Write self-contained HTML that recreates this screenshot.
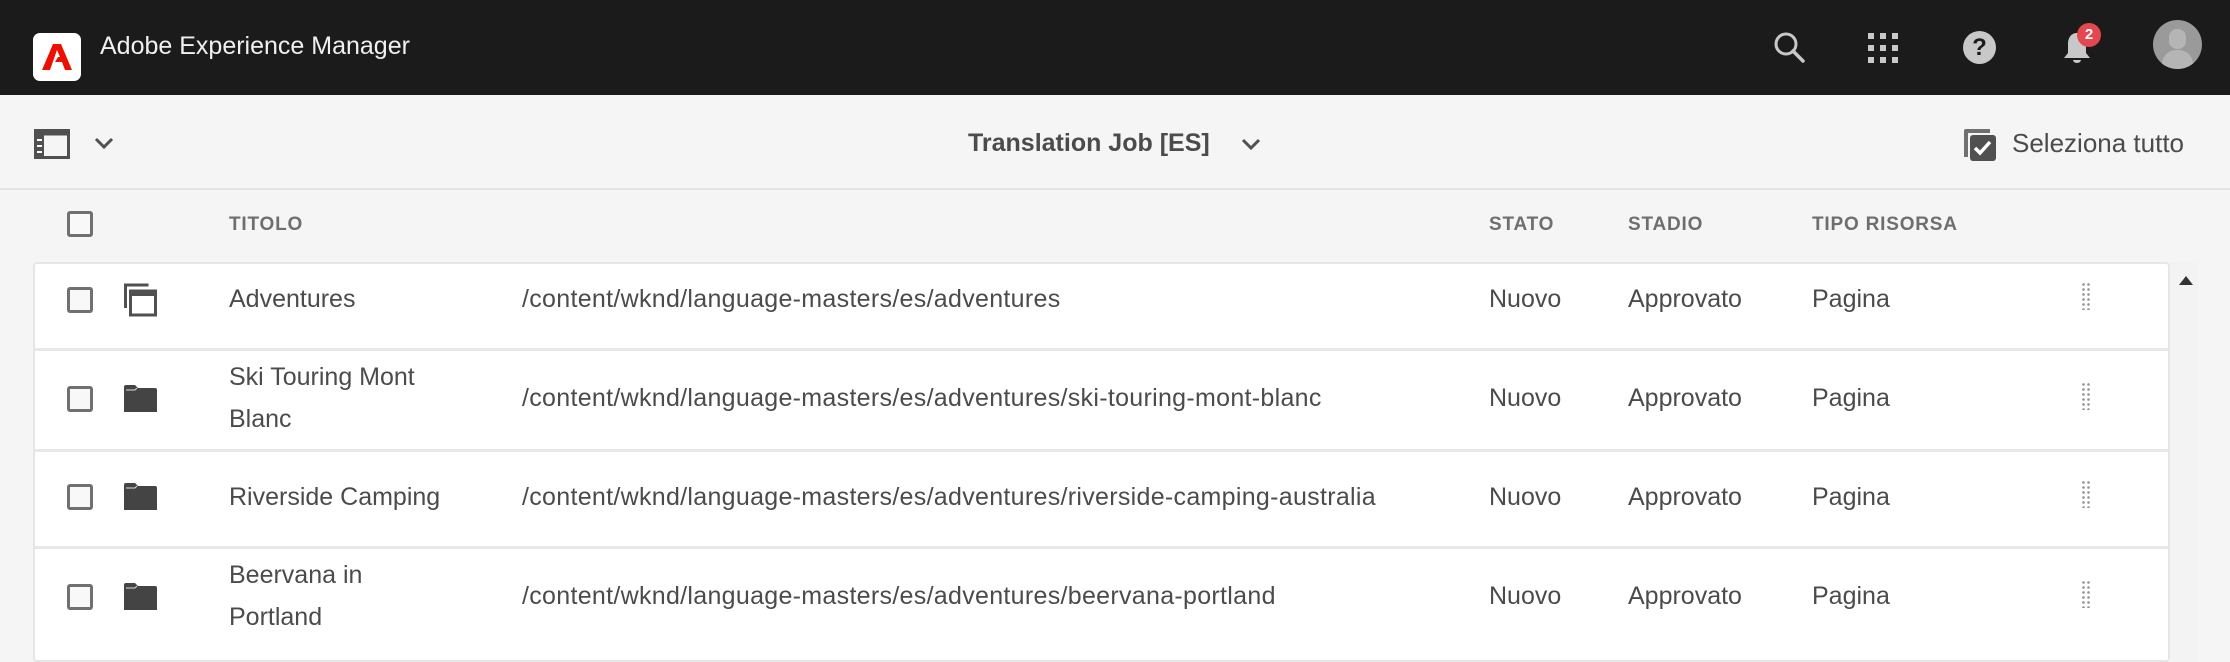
<!DOCTYPE html>
<html><head><meta charset="utf-8">
<style>
*{margin:0;padding:0;box-sizing:border-box}
body{width:2230px;height:648px;overflow:hidden;background:#f5f5f5;font-family:"Liberation Sans",sans-serif;color:#4b4b4b;position:relative}
.abs{position:absolute}
.top{left:0;top:0;width:2230px;height:95px;background:#1b1b1b}
.tb{left:0;top:96px;width:2230px;height:94px;background:#f5f5f5;border-bottom:2px solid #e3e3e3}
.cb{position:absolute;width:26px;height:26px;border:3px solid #707070;border-radius:3px;background:#f8f8f8}
.hd{font-size:19px;font-weight:bold;color:#6e6e6e;letter-spacing:.8px;top:214px}
.card{left:33px;top:262px;width:2137px;height:400px;background:#fff;border:2px solid #e6e6e6;border-radius:4px}
.sep{position:absolute;left:35px;width:2133px;height:3px;background:#e8e8e8}
.t{font-size:25px;color:#4b4b4b;position:absolute;white-space:nowrap}
.p{letter-spacing:.3px}
.dots{position:absolute;width:10px;height:28px;background-image:radial-gradient(circle,#9a9a9a 1.2px,transparent 1.5px);background-size:5px 5px}
</style></head><body>
<div class="abs top"></div>
<div class="abs" style="left:33px;top:33px;width:48px;height:48px;background:#fff;border-radius:7px"></div>
<svg class="abs" style="left:42px;top:44px" width="30" height="26" viewBox="0 0 30 26"><path d="M11 0h8l11 26h-7l-3-8h-7l3-5h2l-3-7-7 20H0z" fill="#eb1000"/></svg>
<div class="abs" style="left:100px;top:32px;font-size:25px;color:#f0f0f0">Adobe Experience Manager</div>
<svg class="abs" style="left:1773px;top:31px" width="34" height="34" viewBox="0 0 34 34"><circle cx="13" cy="13" r="10" fill="none" stroke="#c8c8c8" stroke-width="3"/><path d="M20 20l10 10" stroke="#c8c8c8" stroke-width="3.5" stroke-linecap="round"/></svg>
<svg class="abs" style="left:1867px;top:32px" width="32" height="32" viewBox="0 0 32 32" fill="#c8c8c8"><rect x="1" y="1" width="6" height="6"/><rect x="13" y="1" width="6" height="6"/><rect x="25" y="1" width="6" height="6"/><rect x="1" y="13" width="6" height="6"/><rect x="13" y="13" width="6" height="6"/><rect x="25" y="13" width="6" height="6"/><rect x="1" y="25" width="6" height="6"/><rect x="13" y="25" width="6" height="6"/><rect x="25" y="25" width="6" height="6"/></svg>
<div class="abs" style="left:1963px;top:31px;width:33px;height:33px;border-radius:50%;background:#c8c8c8;color:#1b1b1b;font-weight:bold;font-size:24px;text-align:center;line-height:33px">?</div>
<svg class="abs" style="left:2058px;top:30px" width="38" height="38" viewBox="0 0 38 38"><path d="M19 3c-6 0-9 5-9 11v9l-4 5h26l-4-5v-9c0-6-3-11-9-11z" fill="#c8c8c8"/><path d="M15 30h8a4 3 0 0 1-8 0z" fill="#c8c8c8"/></svg>
<div class="abs" style="left:2077px;top:23px;width:24px;height:24px;border-radius:50%;background:#e34850;color:#fff;font-weight:bold;font-size:15px;text-align:center;line-height:24px">2</div>
<div class="abs" style="left:2153px;top:20px;width:49px;height:49px;border-radius:50%;background:#9a9a9a;overflow:hidden"><div style="position:absolute;left:16px;top:9px;width:17px;height:20px;border-radius:8px;background:#b5b5b5"></div><div style="position:absolute;left:9px;top:30px;width:31px;height:22px;border-radius:14px 14px 0 0;background:#b5b5b5"></div></div>

<div class="abs tb"></div>
<svg class="abs" style="left:34px;top:129px" width="36" height="30" viewBox="0 0 36 30"><rect x="1.5" y="1.5" width="33" height="27" fill="none" stroke="#505050" stroke-width="3"/><rect x="1.5" y="1.5" width="33" height="5" fill="#505050"/><rect x="1" y="6" width="9" height="23" fill="#505050"/><rect x="3" y="10" width="5" height="2" fill="#fff"/><rect x="3" y="16" width="5" height="2" fill="#fff"/><rect x="3" y="22" width="5" height="2" fill="#fff"/></svg>
<svg class="abs" style="left:94px;top:137px" width="20" height="14" viewBox="0 0 20 14"><path d="M2 2l8 8 8-8" fill="none" stroke="#505050" stroke-width="3"/></svg>
<div class="abs" style="left:968px;top:129px;font-size:25px;font-weight:bold;color:#4b4b4b">Translation Job [ES]</div>
<svg class="abs" style="left:1241px;top:138px" width="20" height="14" viewBox="0 0 20 14"><path d="M2 2l8 8 8-8" fill="none" stroke="#505050" stroke-width="3"/></svg>
<svg class="abs" style="left:1962px;top:127px" width="36" height="36" viewBox="0 0 36 36"><path d="M2 4v26h4V6h22V2H4a2 2 0 0 0-2 2z" fill="#707070"/><rect x="8" y="8" width="26" height="26" rx="3" fill="#505050"/><path d="M13 21l5 5 10-11" fill="none" stroke="#fff" stroke-width="3.5"/></svg>
<div class="abs" style="left:2012px;top:128px;font-size:26px;color:#4b4b4b">Seleziona tutto</div>

<div class="cb" style="left:67px;top:211px"></div>
<div class="abs hd" style="left:229px">TITOLO</div>
<div class="abs hd" style="left:1489px">STATO</div>
<div class="abs hd" style="left:1628px">STADIO</div>
<div class="abs hd" style="left:1812px">TIPO RISORSA</div>

<div class="abs card"></div>
<div class="abs" style="left:2170px;top:262px;width:28px;height:400px;background:#f3f3f3"></div>
<svg class="abs" style="left:2179px;top:276px" width="14" height="9" viewBox="0 0 14 9"><path d="M7 0l7 9H0z" fill="#333"/></svg>
<div class="sep" style="top:348px"></div>
<div class="sep" style="top:449px"></div>
<div class="sep" style="top:546px"></div>

<!-- row1 -->
<div class="cb" style="left:67px;top:287px"></div>
<svg class="abs" style="left:124px;top:283px" width="34" height="34" viewBox="0 0 34 34"><path d="M1.5 25V2h23" fill="none" stroke="#505050" stroke-width="3"/><rect x="6.5" y="8" width="25" height="24" fill="none" stroke="#505050" stroke-width="3"/><rect x="6" y="7" width="26" height="6" fill="#505050"/></svg>
<div class="t" style="left:229px;top:285px">Adventures</div>
<div class="t p" style="left:522px;top:285px">/content/wknd/language-masters/es/adventures</div>
<div class="t" style="left:1489px;top:285px">Nuovo</div>
<div class="t" style="left:1628px;top:285px">Approvato</div>
<div class="t" style="left:1812px;top:285px">Pagina</div>
<div class="dots" style="left:2081px;top:282px"></div>

<!-- row2 -->
<div class="cb" style="left:67px;top:386px"></div>
<svg class="abs" style="left:124px;top:385px" width="33" height="27" viewBox="0 0 33 27"><path d="M0 2a2 2 0 0 1 2-2h9l3 3h17a2 2 0 0 1 2 2v22H0z" fill="#444"/><path d="M2 5h9l2-2" fill="none" stroke="#ddd" stroke-width="1"/></svg>
<div class="t" style="left:229px;top:363px">Ski Touring Mont</div>
<div class="t" style="left:229px;top:405px">Blanc</div>
<div class="t p" style="left:522px;top:384px">/content/wknd/language-masters/es/adventures/ski-touring-mont-blanc</div>
<div class="t" style="left:1489px;top:384px">Nuovo</div>
<div class="t" style="left:1628px;top:384px">Approvato</div>
<div class="t" style="left:1812px;top:384px">Pagina</div>
<div class="dots" style="left:2081px;top:382px"></div>

<!-- row3 -->
<div class="cb" style="left:67px;top:484px"></div>
<svg class="abs" style="left:124px;top:483px" width="33" height="27" viewBox="0 0 33 27"><path d="M0 2a2 2 0 0 1 2-2h9l3 3h17a2 2 0 0 1 2 2v22H0z" fill="#444"/><path d="M2 5h9l2-2" fill="none" stroke="#ddd" stroke-width="1"/></svg>
<div class="t" style="left:229px;top:483px">Riverside Camping</div>
<div class="t p" style="left:522px;top:483px">/content/wknd/language-masters/es/adventures/riverside-camping-australia</div>
<div class="t" style="left:1489px;top:483px">Nuovo</div>
<div class="t" style="left:1628px;top:483px">Approvato</div>
<div class="t" style="left:1812px;top:483px">Pagina</div>
<div class="dots" style="left:2081px;top:480px"></div>

<!-- row4 -->
<div class="cb" style="left:67px;top:584px"></div>
<svg class="abs" style="left:124px;top:583px" width="33" height="27" viewBox="0 0 33 27"><path d="M0 2a2 2 0 0 1 2-2h9l3 3h17a2 2 0 0 1 2 2v22H0z" fill="#444"/><path d="M2 5h9l2-2" fill="none" stroke="#ddd" stroke-width="1"/></svg>
<div class="t" style="left:229px;top:561px">Beervana in</div>
<div class="t" style="left:229px;top:603px">Portland</div>
<div class="t p" style="left:522px;top:582px">/content/wknd/language-masters/es/adventures/beervana-portland</div>
<div class="t" style="left:1489px;top:582px">Nuovo</div>
<div class="t" style="left:1628px;top:582px">Approvato</div>
<div class="t" style="left:1812px;top:582px">Pagina</div>
<div class="dots" style="left:2081px;top:580px"></div>
</body></html>
